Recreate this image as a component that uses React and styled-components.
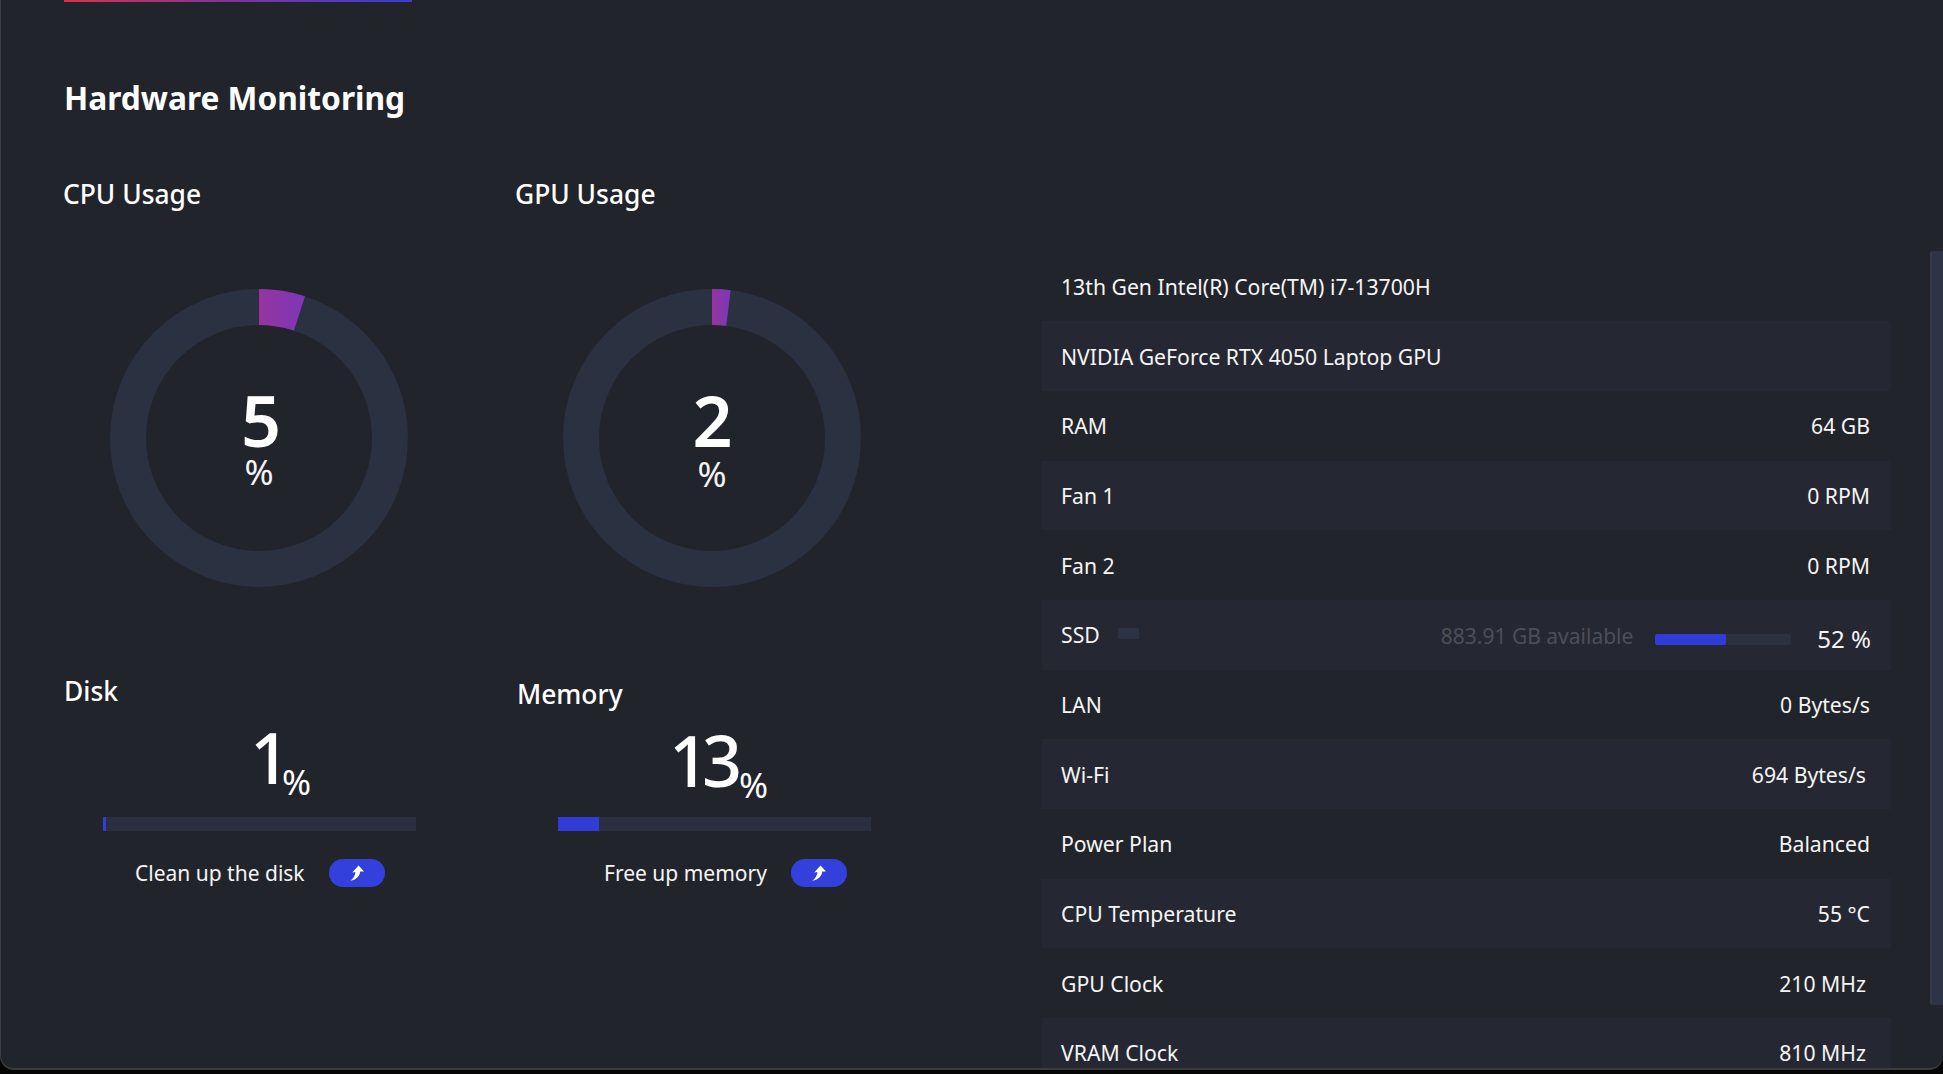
import React from 'react'
import styled, { createGlobalStyle } from 'styled-components'

const GlobalStyle = createGlobalStyle`
  html, body {
    margin: 0;
    padding: 0;
    height: 100%;
    overflow: hidden;
    background: #050505;
  }
  * { box-sizing: border-box; }
`

const Frame = styled.div`
  position: relative;
  height: 1070px;
  padding-left: 62px;
  background: #22242c;
  border-left: 1px solid #3c3d40;
  border-bottom: 2px solid #3a3b3e;
  border-radius: 0 0 14px 14px;
  overflow: hidden;
  font-family: "Noto Sans", "Open Sans", sans-serif;
  color: #f5f5f5;
`

const TopLine = styled.div`
  width: 348px;
  height: 2px;
  margin-left: 1px;
  background: linear-gradient(90deg, #d9324a, #7c34a0 50%, #3a3fd6);
`

const Title = styled.h1`
  margin: 73px 0 0 1px;
  font-size: 31.7px;
  line-height: 46px;
  font-weight: 700;
  color: #fff;
`

const Body = styled.div`
  display: flex;
  align-items: flex-start;
`

const LeftPane = styled.div`
  width: 979px;
  flex: none;
  display: grid;
  grid-template-columns: 452px 452px;
`

const PaneTitle = styled.h2`
  margin: 0;
  font-size: 26.4px;
  line-height: 36px;
  font-weight: 500;
  color: #fff;
`

const GaugeCard = styled.section`
  padding-top: 55px;
  height: 552px;
`

const GaugeBox = styled.div`
  display: grid;
  width: 298px;
  height: 298px;
  margin: 77px 0 0 ${p => p.$ringLeft}px;

  > * { grid-area: 1 / 1; }
`

const GaugeText = styled.div`
  display: flex;
  flex-direction: column;
  align-items: center;
  padding-top: 100px;
`

const GaugeNumber = styled.span`
  font-size: 70px;
  line-height: 62px;
  font-weight: 600;
  padding-left: ${p => p.$shift}px;
  color: #fff;
`

const GaugePercent = styled.span`
  font-size: 35px;
  line-height: 36px;
  margin-top: ${p => p.$drop}px;
`

const MetricCard = styled.section`
  margin-left: ${p => p.$nudge}px;
  padding-top: ${p => p.$top}px;
`

const MetricValue = styled.div`
  display: flex;
  align-items: baseline;
  height: 68px;
  margin-top: 14px;
  padding-left: ${p => p.$valueLeft}px;
  color: #fff;
`

const MetricNumber = styled.span`
  font-size: 70px;
  line-height: 68px;
  font-weight: 500;
  letter-spacing: -7px;
`

const MetricPercent = styled.span`
  font-size: 35px;
  line-height: 31px;
  margin-left: ${p => p.$percentLeft}px;
  position: relative;
  top: 11px;
`

const MetricBar = styled.div`
  width: 313px;
  height: 14px;
  margin: ${p => p.$barGap}px 0 0 ${p => p.$barLeft}px;
  background: #2a2e40;
`

const MetricFill = styled.div`
  height: 100%;
  background: #303cd8;
`

const MetricAction = styled.div`
  display: flex;
  align-items: center;
  gap: 24px;
  margin-top: 28px;
  padding-left: ${p => p.$actionLeft}px;
  font-size: 21px;
  line-height: 28px;
`

const ArrowButton = styled.button`
  display: flex;
  align-items: center;
  justify-content: center;
  width: 56px;
  height: 28px;
  padding: 0;
  border: 0;
  border-radius: 14px;
  background: #3440dc;
`

const InfoTable = styled.div`
  width: 849px;
  flex: none;
  display: grid;
  grid-auto-rows: 69.7px;
  margin-top: 130.5px;
  font-size: 21.2px;
`

const Row = styled.div`
  display: flex;
  align-items: center;
  justify-content: space-between;
  padding: 0 ${p => p.$inset || 21}px 0 19px;
  background: ${p => (p.$striped ? '#252833' : 'transparent')};
`

const SsdLabel = styled.div`
  display: flex;
  align-items: center;
  gap: 18px;
  margin-top: 0;
`

const SsdSwatch = styled.span`
  width: 21px;
  height: 11px;
  margin-top: -3px;
  border-radius: 1px;
  background: #2c3344;
`

const SsdStatus = styled.div`
  display: flex;
  align-items: center;
`

const SsdAvailable = styled.span`
  font-size: 21px;
  color: #4c4f59;
  margin-top: 3px;
`

const SsdBar = styled.div`
  width: 136px;
  height: 11px;
  margin: 10px 26px 0 22px;
  border-radius: 2px;
  background: #2c3140;
  overflow: hidden;
`

const SsdFill = styled.div`
  height: 100%;
  border-radius: 2px;
  background: #303cd8;
`

const SsdPercent = styled.span`
  font-size: 24px;
  margin-top: 8px;
`

const ScrollThumb = styled.div`
  position: absolute;
  top: 251px;
  right: 0;
  width: 13px;
  height: 754px;
  background: #2c3445;
  border-left: 2px solid #343a48;
  border-radius: 3px 0 0 3px;
`

function arcPath(cx, cy, r, pct) {
  const a = (pct / 100) * 2 * Math.PI
  const x = cx + r * Math.sin(a)
  const y = cy - r * Math.cos(a)
  return `M ${cx} ${cy - r} A ${r} ${r} 0 0 1 ${x} ${y}`
}

const Ring = ({ value, id }) => (
  <svg width="298" height="298" viewBox="0 0 298 298">
    <defs>
      <linearGradient id={id} x1="0" y1="0" x2="1" y2="0">
        <stop offset="0" stopColor="#96349f" />
        <stop offset="1" stopColor="#7f37b4" />
      </linearGradient>
    </defs>
    <circle cx="149" cy="149" r="131" fill="none" stroke="#2a3140" strokeWidth="36" />
    <path d={arcPath(149, 149, 131, value)} fill="none" stroke={`url(#${id})`} strokeWidth="36" />
  </svg>
)

const BentArrow = () => (
  <svg width="14" height="16" viewBox="0 0 14 16">
    <path d="M8.6 .4 L14 6.6 L10.2 6.4 C10 10.4 7 14.4 .2 15.8 C3.6 13.4 5.2 10.4 5.4 7 L2.2 7.4 Z" fill="#fff" />
  </svg>
)

const Gauge = ({ title, value, id, ringLeft, shift, drop }) => (
  <GaugeCard>
    <PaneTitle>{title}</PaneTitle>
    <GaugeBox $ringLeft={ringLeft}>
      <Ring value={value} id={id} />
      <GaugeText>
        <GaugeNumber $shift={shift}>{value}</GaugeNumber>
        <GaugePercent $drop={drop}>%</GaugePercent>
      </GaugeText>
    </GaugeBox>
  </GaugeCard>
)

const Metric = ({ title, value, action, nudge, top, valueLeft, percentLeft, barGap, barLeft, actionLeft }) => (
  <MetricCard $nudge={nudge} $top={top}>
    <PaneTitle>{title}</PaneTitle>
    <MetricValue $valueLeft={valueLeft}>
      <MetricNumber>{value}</MetricNumber>
      <MetricPercent $percentLeft={percentLeft}>%</MetricPercent>
    </MetricValue>
    <MetricBar $barGap={barGap} $barLeft={barLeft}>
      <MetricFill style={{ width: `${value}%` }} />
    </MetricBar>
    <MetricAction $actionLeft={actionLeft}>
      {action}
      <ArrowButton><BentArrow /></ArrowButton>
    </MetricAction>
  </MetricCard>
)

const rows = [
  { label: '13th Gen Intel(R) Core(TM) i7-13700H' },
  { label: 'NVIDIA GeForce RTX 4050 Laptop GPU' },
  { label: 'RAM', value: '64 GB' },
  { label: 'Fan 1', value: '0 RPM' },
  { label: 'Fan 2', value: '0 RPM' },
  { ssd: true },
  { label: 'LAN', value: '0 Bytes/s' },
  { label: 'Wi-Fi', value: '694 Bytes/s', inset: 25 },
  { label: 'Power Plan', value: 'Balanced' },
  { label: 'CPU Temperature', value: '55 °C' },
  { label: 'GPU Clock', value: '210 MHz', inset: 25 },
  { label: 'VRAM Clock', value: '810 MHz', inset: 25 },
]

export default function App() {
  return (
    <>
      <GlobalStyle />
      <Frame>
        <TopLine />
        <Title>Hardware Monitoring</Title>
        <Body>
          <LeftPane>
            <Gauge title="CPU Usage" value={5} id="cpuArc" ringLeft={47} shift={4} drop={3} />
            <Gauge title="GPU Usage" value={2} id="gpuArc" ringLeft={48} shift={1} drop={5} />
            <Metric
              title="Disk"
              value={1}
              action="Clean up the disk"
              nudge={1}
              top={0}
              valueLeft={186}
              percentLeft={-1}
              barGap={26}
              barLeft={39}
              actionLeft={71}
            />
            <Metric
              title="Memory"
              value={13}
              action="Free up memory"
              nudge={2}
              top={3}
              valueLeft={152}
              percentLeft={4}
              barGap={22.5}
              barLeft={41}
              actionLeft={87}
            />
          </LeftPane>
          <InfoTable>
            {rows.map((row, i) =>
              row.ssd ? (
                <Row key={i} $striped={i % 2 === 1} $inset={20}>
                  <SsdLabel>
                    SSD
                    <SsdSwatch />
                  </SsdLabel>
                  <SsdStatus>
                    <SsdAvailable>883.91 GB available</SsdAvailable>
                    <SsdBar>
                      <SsdFill style={{ width: '52%' }} />
                    </SsdBar>
                    <SsdPercent>52 %</SsdPercent>
                  </SsdStatus>
                </Row>
              ) : (
                <Row key={i} $striped={i % 2 === 1} $inset={row.inset}>
                  <span>{row.label}</span>
                  {row.value && <span>{row.value}</span>}
                </Row>
              )
            )}
          </InfoTable>
        </Body>
        <ScrollThumb />
      </Frame>
    </>
  )
}
